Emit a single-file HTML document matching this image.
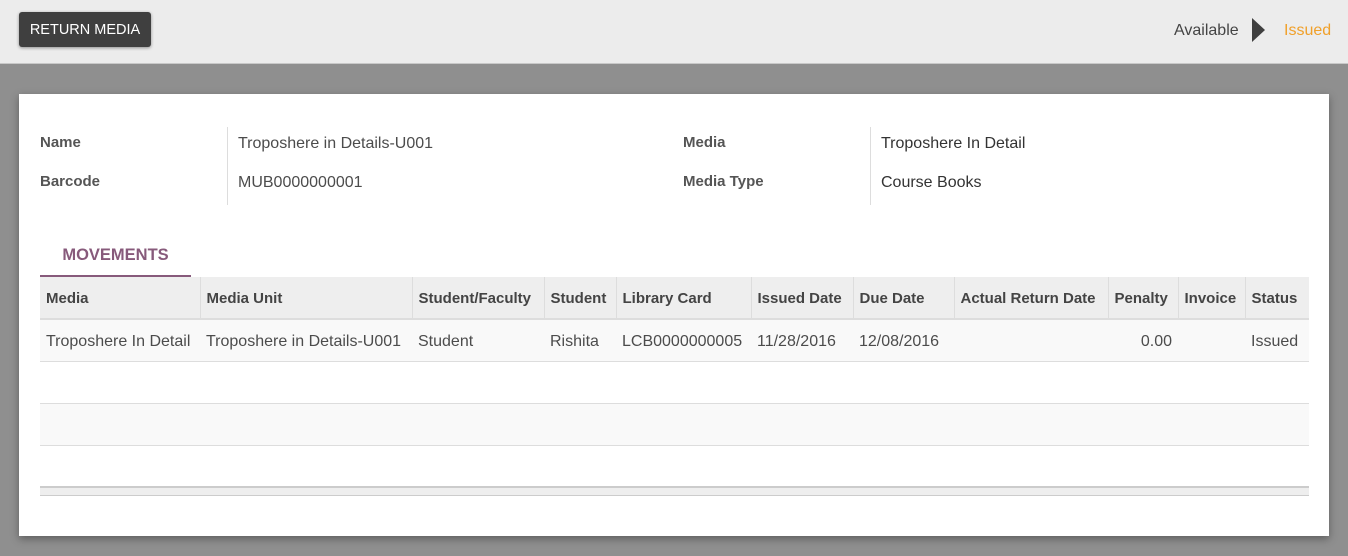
<!DOCTYPE html>
<html><head><style>
*{box-sizing:border-box;margin:0;padding:0}
body{width:1348px;height:556px;background:#8f8f8f;font-family:"Liberation Sans",sans-serif;font-size:15px;color:#4c4c4c;position:relative;overflow:hidden}
.top{position:absolute;left:0;top:0;width:1348px;height:64px;background:#ececec;border-bottom:1px solid #c8c8c8}
.btn{position:absolute;left:19px;top:12px;width:132px;height:35px;background:#3f3f3f;color:#fff;border-radius:3px;font-size:14.5px;line-height:37px;text-align:center;box-shadow:0 1px 3px rgba(0,0,0,.4)}
.st{position:absolute;top:22px;font-size:16px}
.sheet{position:absolute;left:19px;top:94px;width:1310px;height:442px;background:#fff;box-shadow:0 3px 8px rgba(0,0,0,.35)}
.lbl{position:absolute;font-weight:bold;color:#555;font-size:15px}
.val{position:absolute;color:#4c4c4c;font-size:16px}
.vl{position:absolute;width:1px;background:#ddd}
.tab{position:absolute;left:21px;top:148px;width:151px;height:35px;border-bottom:2px solid #875a7b;color:#875a7b;font-weight:bold;font-size:16.5px;text-align:center;line-height:26px}
table{position:absolute;left:21px;top:183px;width:1269px;border-collapse:collapse;table-layout:fixed}
th{background:#eee;height:42px;text-align:left;padding-left:6px;padding-top:2px;font-size:15px;color:#444;border-left:1px solid #ddd;border-bottom:2px solid #ddd;white-space:nowrap}
th:first-child{border-left:none}
td{height:42px;padding-left:6px;padding-top:3px;font-size:16px;white-space:nowrap;border-bottom:1px solid #ddd;overflow:hidden}
tr.a td{background:#f9f9f9}
tr.f td{height:8px;padding:0;background:#eee;border-top:2px solid #ccc;border-bottom:1px solid #ccc}
</style></head><body>
<div class="top">
<div class="btn">RETURN MEDIA</div>
<div class="st" style="left:1174px;color:#444">Available</div>
<svg style="position:absolute;left:1252px;top:18px" width="14" height="24"><polygon points="0,0 13,12 0,24" fill="#3f3f3f"/></svg>
<div class="st" style="left:1284px;color:#f0a02a">Issued</div>
</div>
<div class="sheet">
<div class="lbl" style="left:21px;top:40px">Name</div>
<div class="lbl" style="left:21px;top:79px">Barcode</div>
<div class="vl" style="left:208px;top:33px;height:78px"></div>
<div class="val" style="left:219px;top:41px">Troposhere in Details-U001</div>
<div class="val" style="left:219px;top:80px">MUB0000000001</div>
<div class="lbl" style="left:664px;top:40px">Media</div>
<div class="lbl" style="left:664px;top:79px">Media Type</div>
<div class="vl" style="left:851px;top:33px;height:78px"></div>
<div class="val" style="left:862px;top:41px;color:#333">Troposhere In Detail</div>
<div class="val" style="left:862px;top:80px;color:#333">Course Books</div>
<div class="tab">MOVEMENTS</div>
<table>
<colgroup><col style="width:160px"><col style="width:212px"><col style="width:132px"><col style="width:72px"><col style="width:135px"><col style="width:102px"><col style="width:101px"><col style="width:154px"><col style="width:70px"><col style="width:67px"><col style="width:64px"></colgroup>
<tr><th>Media</th><th>Media Unit</th><th>Student/Faculty</th><th>Student</th><th>Library Card</th><th>Issued Date</th><th>Due Date</th><th>Actual Return Date</th><th>Penalty</th><th>Invoice</th><th>Status</th></tr>
<tr class="a"><td>Troposhere In Detail</td><td>Troposhere in Details-U001</td><td>Student</td><td>Rishita</td><td>LCB0000000005</td><td>11/28/2016</td><td>12/08/2016</td><td></td><td style="text-align:right;padding-right:6px">0.00</td><td></td><td>Issued</td></tr>
<tr><td colspan="11"></td></tr>
<tr class="a"><td colspan="11"></td></tr>
<tr><td colspan="11"></td></tr>
<tr class="f"><td colspan="11"></td></tr>
</table>
</div>
</body></html>
